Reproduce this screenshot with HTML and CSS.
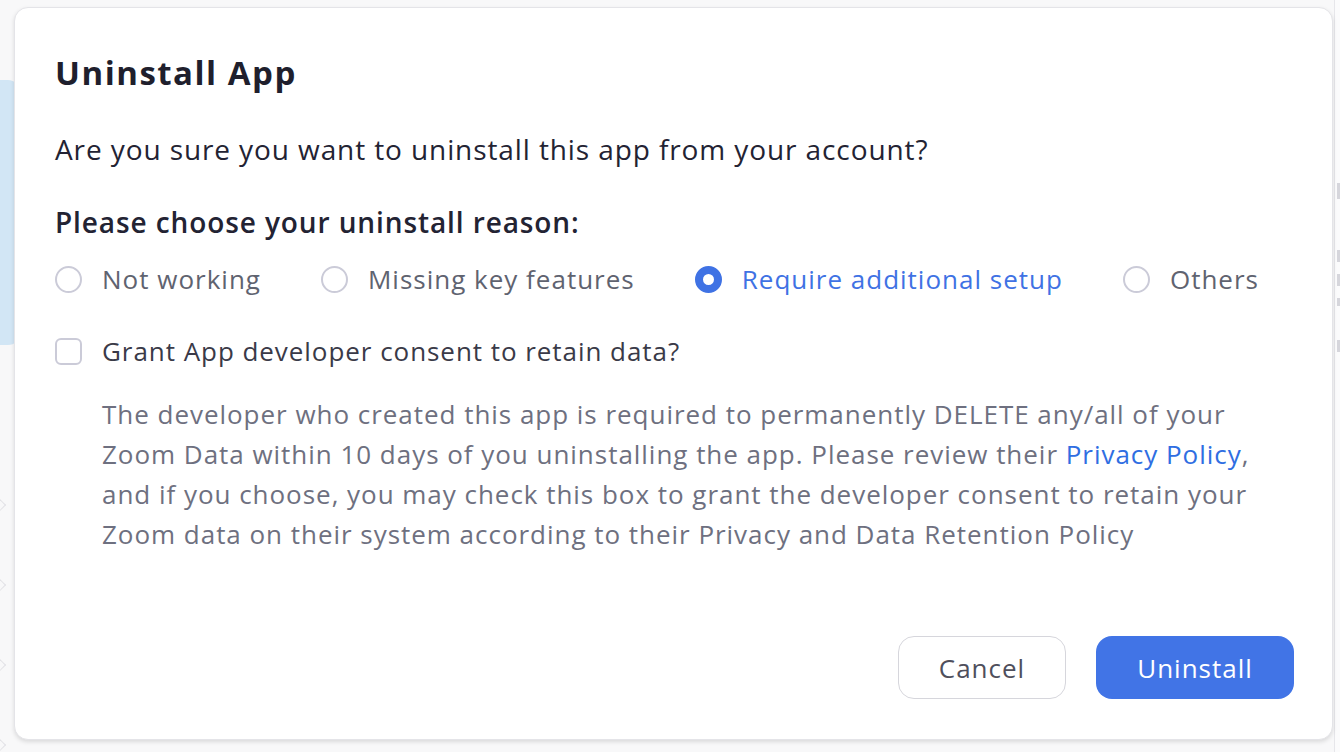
FILE: index.html
```html
<!DOCTYPE html>
<html>
<head>
<meta charset="utf-8">
<link rel="stylesheet" href="styles.css">
</head>
<body>
<div class="backdrop">
  <div class="bg-blue"></div>
  <div class="bg-right">
    <span class="frag f1"></span>
    <span class="frag f2"></span>
    <span class="frag f3"></span>
    <span class="frag f4"></span>
    <span class="frag f5"></span>
  </div>
  <div class="bg-chev c1"></div>
  <div class="bg-chev c2"></div>
  <div class="bg-chev c3"></div>
  <div class="bg-chev c4"></div>
</div>
<div class="modal">
  <h1 class="title">Uninstall App</h1>
  <p class="question">Are you sure you want to uninstall this app from your account?</p>
  <h2 class="subtitle">Please choose your uninstall reason:</h2>
  <div class="reasons">
    <label class="radio"><span class="circle"></span><span class="rlabel">Not working</span></label>
    <label class="radio"><span class="circle"></span><span class="rlabel">Missing key features</span></label>
    <label class="radio checked"><span class="circle"></span><span class="rlabel">Require additional setup</span></label>
    <label class="radio"><span class="circle"></span><span class="rlabel">Others</span></label>
  </div>
  <label class="checkrow"><span class="box"></span><span class="clabel">Grant App developer consent to retain data?</span></label>
  <p class="desc">The developer who created this app is required to permanently DELETE any/all of your Zoom Data within 10 days of you uninstalling the app. Please review their <span class="link">Privacy Policy</span>, and if you choose, you may check this box to grant the developer consent to retain your Zoom data on their system according to their Privacy and Data Retention Policy</p>
  <div class="actions">
    <button class="btn cancel">Cancel</button>
    <button class="btn primary">Uninstall</button>
  </div>
</div>
</body>
</html>
```

FILE: styles.css
```css
* { box-sizing: border-box; }
html, body { margin: 0; padding: 0; }
body {
  width: 1340px;
  height: 752px;
  overflow: hidden;
  background: #f8f8f9;
  font-family: "Open Sans", "Noto Sans", "Liberation Sans", sans-serif;
  position: relative;
  padding: 7px 7px 0 14px;
}
.backdrop { position: absolute; inset: 0; z-index: 0; }
.bg-blue {
  position: absolute;
  left: -20px;
  top: 80px;
  width: 40px;
  height: 265px;
  background: #d2e6f5;
  border-radius: 0 12px 12px 0;
}
.bg-right {
  position: absolute;
  left: 1334px;
  top: 0;
  width: 6px;
  height: 752px;
  border-left: 1px solid #e6e6ea;
  background: #fbfbfc;
}
.frag {
  position: absolute;
  left: 2px;
  width: 3px;
  height: 12px;
  background: #d6d6dc;
}
.f1 { top: 183px; height: 16px; }
.f2 { top: 250px; }
.f3 { top: 274px; }
.f4 { top: 298px; height: 8px; }
.f5 { top: 340px; }
.bg-chev {
  position: absolute;
  left: -6px;
  width: 10px;
  height: 10px;
  border-top: 1px solid #e2e2e6;
  border-right: 1px solid #e2e2e6;
  transform: rotate(45deg);
}
.c1 { top: 500px; }
.c2 { top: 580px; }
.c3 { top: 660px; }
.c4 { top: 740px; }

.modal {
  position: relative;
  z-index: 1;
  width: 1319px;
  height: 733px;
  background: #ffffff;
  border: 1px solid #e4e4e8;
  border-radius: 14px;
  box-shadow: 0 2px 4px rgba(0, 0, 0, 0.12);
  padding: 45px 38px 40px 40px;
  display: flex;
  flex-direction: column;
}
.title {
  margin: 0;
  font-size: 33px;
  line-height: 40px;
  font-weight: 700;
  letter-spacing: 1.5px;
  color: #1f1f2d;
}
.question {
  margin: 36px 0 0;
  font-size: 28px;
  line-height: 40px;
  letter-spacing: 0.9px;
  color: #232333;
}
.subtitle {
  margin: 33px 0 0;
  font-size: 28px;
  line-height: 40px;
  font-weight: 600;
  letter-spacing: 0.9px;
  color: #232333;
}
.reasons {
  margin-top: 17px;
  display: flex;
  gap: 60px;
}
.radio {
  display: flex;
  align-items: center;
  height: 40px;
}
.circle {
  width: 27px;
  height: 27px;
  border-radius: 50%;
  border: 2px solid #cbcbd8;
  background: #fff;
  margin-right: 20px;
  flex: none;
}
.rlabel {
  font-size: 26px;
  letter-spacing: 1px;
  color: #5f6370;
}
.radio.checked .circle {
  border: 8px solid #3f72e4;
  background: #fff;
}
.radio.checked .rlabel { color: #3f72e4; }
.checkrow {
  margin-top: 32px;
  display: flex;
  align-items: center;
  height: 40px;
}
.box {
  width: 27px;
  height: 27px;
  border-radius: 6px;
  border: 2px solid #cbcbd8;
  margin-right: 20px;
  flex: none;
}
.clabel {
  font-size: 26px;
  letter-spacing: 0.95px;
  color: #3a3a48;
}
.desc {
  margin: 23px 0 0 47px;
  font-size: 26px;
  line-height: 40px;
  letter-spacing: 0.97px;
  color: #6e7080;
  max-width: 1160px;
}
.link { color: #2f6ee2; }
.actions {
  margin-top: auto;
  display: flex;
  justify-content: flex-end;
  gap: 30px;
}
.btn {
  height: 63px;
  border-radius: 16px;
  font-family: "Open Sans", "Noto Sans", "Liberation Sans", sans-serif;
  font-size: 26px;
  letter-spacing: 1px;
  padding: 0;
}
.cancel {
  width: 168px;
  background: #fff;
  border: 1px solid #d6d6dc;
  color: #4f4f5c;
}
.primary {
  width: 198px;
  background: #4174e6;
  border: none;
  color: #fff;
}
```
